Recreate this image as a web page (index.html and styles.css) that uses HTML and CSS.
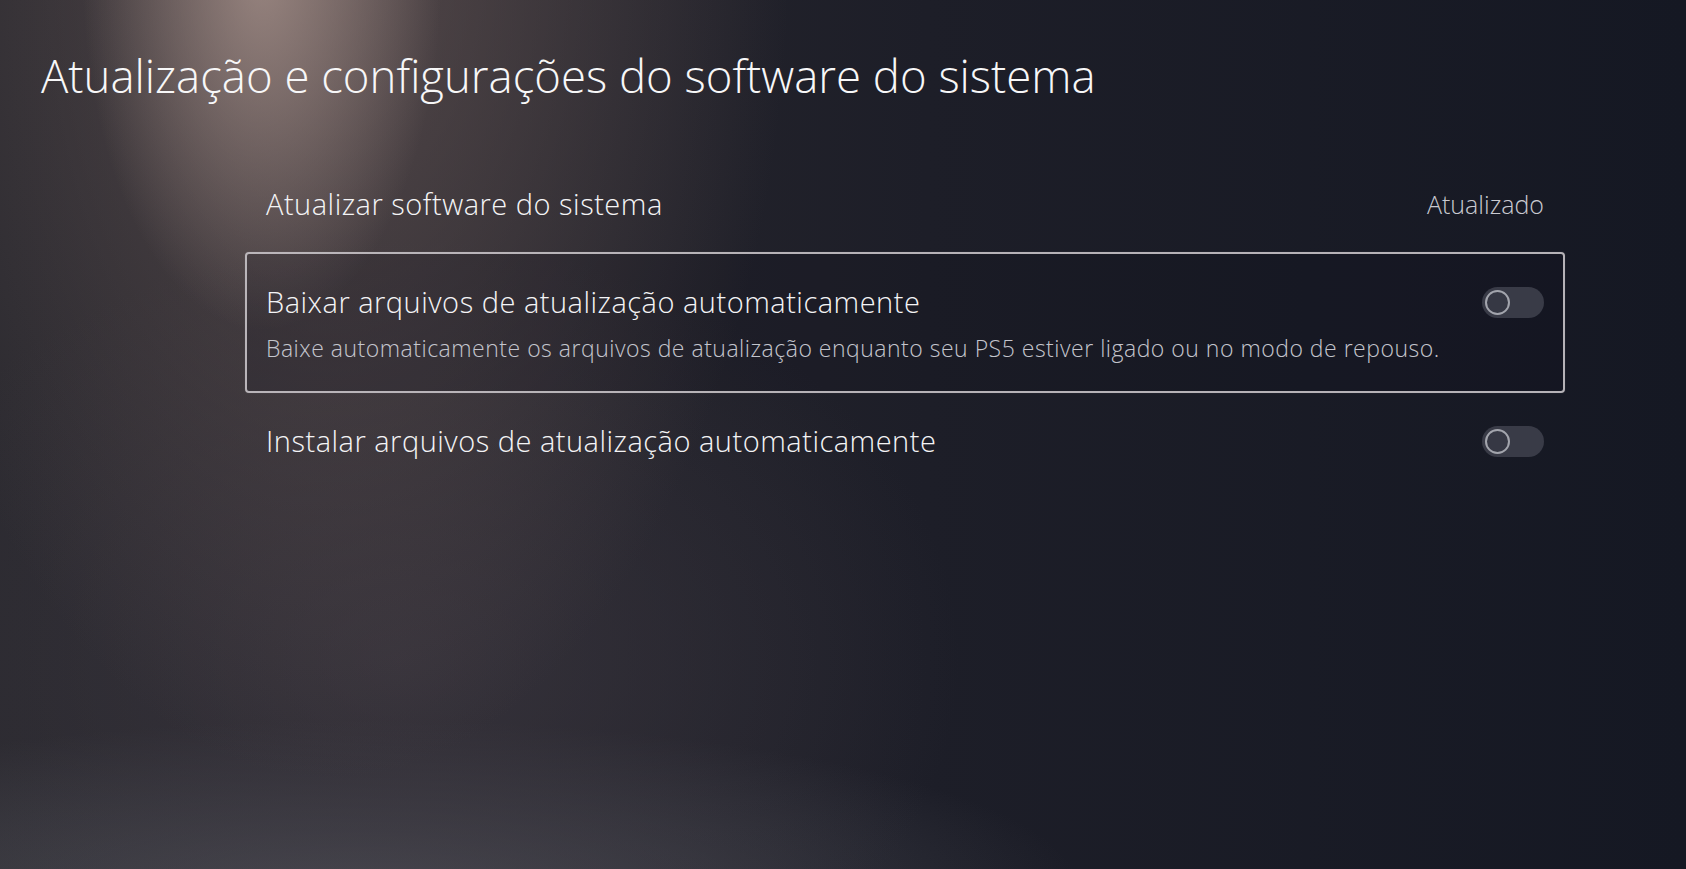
FILE: index.html
```html
<!DOCTYPE html>
<html lang="pt-BR">
<head>
<meta charset="utf-8">
<title>Atualização e configurações do software do sistema</title>
<link rel="stylesheet" href="styles.css">
</head>
<body>
<main class="screen">
  <h1 class="page-title">Atualização e configurações do software do sistema</h1>
  <ul class="settings">
    <li class="setting">
      <div class="setting-head">
        <span class="setting-label">Atualizar software do sistema</span>
        <span class="setting-value">Atualizado</span>
      </div>
    </li>
    <li class="setting is-focused">
      <div class="setting-head">
        <span class="setting-label">Baixar arquivos de atualização automaticamente</span>
        <span class="toggle" role="switch" aria-checked="false"><span class="toggle-knob"></span></span>
      </div>
      <p class="setting-desc">Baixe automaticamente os arquivos de atualização enquanto seu PS5 estiver ligado ou no modo de repouso.</p>
    </li>
    <li class="setting">
      <div class="setting-head">
        <span class="setting-label">Instalar arquivos de atualização automaticamente</span>
        <span class="toggle" role="switch" aria-checked="false"><span class="toggle-knob"></span></span>
      </div>
    </li>
  </ul>
</main>
</body>
</html>
```
FILE: styles.css
```css
html, body {
  margin: 0;
  height: 100%;
}

body {
  font-family: "Open Sans", "Noto Sans", "Liberation Sans", sans-serif;
  font-weight: 300;
  color: #f3f3f5;
  background-color: #161824;
  background-image:
    radial-gradient(ellipse 180px 360px at 262px -30px, rgba(172, 150, 143, 0.78), rgba(172, 150, 143, 0) 100%),
    radial-gradient(ellipse 460px 840px at 330px -60px, rgba(104, 88, 87, 0.7), rgba(104, 88, 87, 0) 100%),
    radial-gradient(ellipse 560px 420px at 400px 660px, rgba(62, 57, 66, 0.65), rgba(62, 57, 66, 0) 100%),
    radial-gradient(ellipse 720px 170px at 360px 890px, rgba(88, 89, 97, 0.7), rgba(88, 89, 97, 0) 100%),
    linear-gradient(90deg, #2a292f 0%, #27262d 25%, #1d1e28 55%, #151823 100%);
  overflow: hidden;
}

.screen {
  padding: 47px 0 0 41px;
}

.page-title {
  margin: 0;
  font-size: 45.5px;
  line-height: 56px;
  font-weight: 300;
  color: #f7f7f8;
}

.settings {
  list-style: none;
  margin: 53px 0 0 204px;
  padding: 0;
  width: 1320px;
}

.setting {
  padding: 28px 19px;
  border: 2px solid transparent;
  border-radius: 4px;
}

.setting.is-focused {
  border-color: rgba(200, 195, 200, 0.9);
  background: rgba(12, 12, 22, 0.16);
  box-shadow: 0 0 2px rgba(255, 255, 255, 0.1);
}

.setting-head {
  display: flex;
  align-items: center;
  justify-content: space-between;
  height: 36px;
}

.is-focused .setting-head {
  margin-top: 2px;
}

.setting-label {
  font-size: 29px;
  line-height: 36px;
  letter-spacing: 0.5px;
  color: #f4f4f6;
}

.setting-value {
  font-size: 25px;
  line-height: 36px;
  color: #c9cad1;
}

.setting-desc {
  margin: 13px 0 0;
  font-size: 23px;
  line-height: 30px;
  letter-spacing: 0.5px;
  color: #c4c5cd;
}

.toggle {
  position: relative;
  display: block;
  width: 62px;
  height: 31px;
  border-radius: 16px;
  background: #393b47;
}

.toggle-knob {
  position: absolute;
  left: 3px;
  top: 3px;
  width: 21px;
  height: 21px;
  border: 2px solid #a3a5ad;
  border-radius: 50%;
  background: #363844;
}
```
